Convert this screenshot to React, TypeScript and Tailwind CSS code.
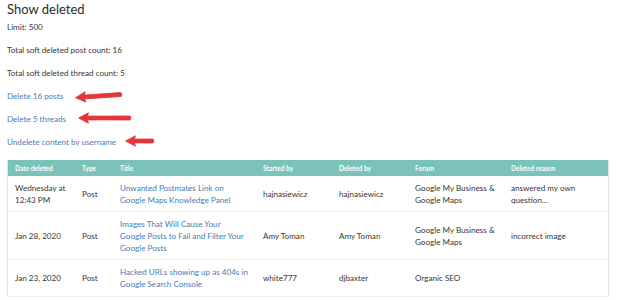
import React from "react";

const Arrow = ({ w, className }: { w: number; className?: string }) => (
  <svg width={w + 2} height="14" viewBox={`0 0 ${w + 2} 14`} className={className}>
    <path
      d={`M1.5 7 L11.5 1.8 L10.5 5.1 L${w - 1} 5 Q${w + 1} 7 ${w - 1} 9 L10.5 8.9 L11.5 12.2 Z`}
      fill="#e2373b"
      stroke="#e2373b"
      strokeWidth="0.8"
      strokeLinejoin="round"
    />
  </svg>
);

const rows = [
  {
    date: ["Wednesday at", "12:43 PM"],
    type: "Post",
    title: ["Unwanted Postmates Link on", "Google Maps Knowledge Panel"],
    started: "hajnasiewicz",
    deleted: "hajnasiewicz",
    forum: ["Google My Business &", "Google Maps"],
    reason: ["answered my own", "question..."],
    h: "h-[36px]",
  },
  {
    date: ["Jan 28, 2020"],
    type: "Post",
    title: ["Images That Will Cause Your", "Google Posts to Fail and Filter Your", "Google Posts"],
    started: "Amy Toman",
    deleted: "Amy Toman",
    forum: ["Google My Business &", "Google Maps"],
    reason: ["incorrect image"],
    h: "h-[48px]",
  },
  {
    date: ["Jan 23, 2020"],
    type: "Post",
    title: ["Hacked URLs showing up as 404s in", "Google Search Console"],
    started: "white777",
    deleted: "djbaxter",
    forum: ["Organic SEO"],
    reason: [],
    h: "h-[37px]",
  },
];

const Lines = ({ l }: { l: string[] }) => (
  <>
    {l.map((s, i) => (
      <div key={i} className="whitespace-nowrap">{s}</div>
    ))}
  </>
);

export default function App() {
  return (
    <div className="w-[618px] h-[300px] overflow-hidden bg-white pl-[7px] text-[#363636] font-[Lato,'Noto_Sans',sans-serif]">
      <div className="text-[13px] leading-[18px] text-[#2b2b2b]">Show deleted</div>
      <div className="text-[8.1px] leading-[23px] -mt-[2px]">
        <div>Limit: 500</div>
        <div>Total soft deleted post count: 16</div>
        <div>Total soft deleted thread count: 5</div>
        <div className="flex items-center text-[#467db6]">
          <span>Delete 16 posts</span>
          <Arrow w={48} className="ml-[11px] -mt-[1px] -rotate-[4deg]" />
        </div>
        <div className="flex items-center text-[#467db6]">
          <span>Delete 5 threads</span>
          <Arrow w={54} className="ml-[11px] -mt-[4px]" />
        </div>
        <div className="flex items-center text-[#467db6]">
          <span>Undelete content by username</span>
          <Arrow w={30} className="ml-[8px] -mt-[4px]" />
        </div>
      </div>
      <div className="mt-[6px] w-[602px] border-x border-[#e6e6e6] text-[8.1px] leading-[12px]">
        <div className="grid grid-cols-[67px_38px_143px_76px_76px_96px_106px] h-[16px] items-center bg-[#7bc3ba] text-white font-bold text-[6.6px]">
          <div className="pl-[7px]">Date deleted</div>
          <div className="pl-[7px]">Type</div>
          <div className="pl-[7px]">Title</div>
          <div className="pl-[7px]">Started by</div>
          <div className="pl-[7px]">Deleted by</div>
          <div className="pl-[7px]">Forum</div>
          <div className="pl-[7px]">Deleted reason</div>
        </div>
        {rows.map((r, i) => (
          <div
            key={i}
            className={`grid grid-cols-[67px_38px_143px_76px_76px_96px_106px] ${r.h} items-center border-b border-[#eeeeee]`}
          >
            <div className="pl-[7px]"><Lines l={r.date} /></div>
            <div className="pl-[7px]">{r.type}</div>
            <div className="pl-[7px] text-[#467db6]"><Lines l={r.title} /></div>
            <div className="pl-[7px]">{r.started}</div>
            <div className="pl-[7px]">{r.deleted}</div>
            <div className="pl-[7px]"><Lines l={r.forum} /></div>
            <div className="pl-[7px]"><Lines l={r.reason} /></div>
          </div>
        ))}
      </div>
    </div>
  );
}
